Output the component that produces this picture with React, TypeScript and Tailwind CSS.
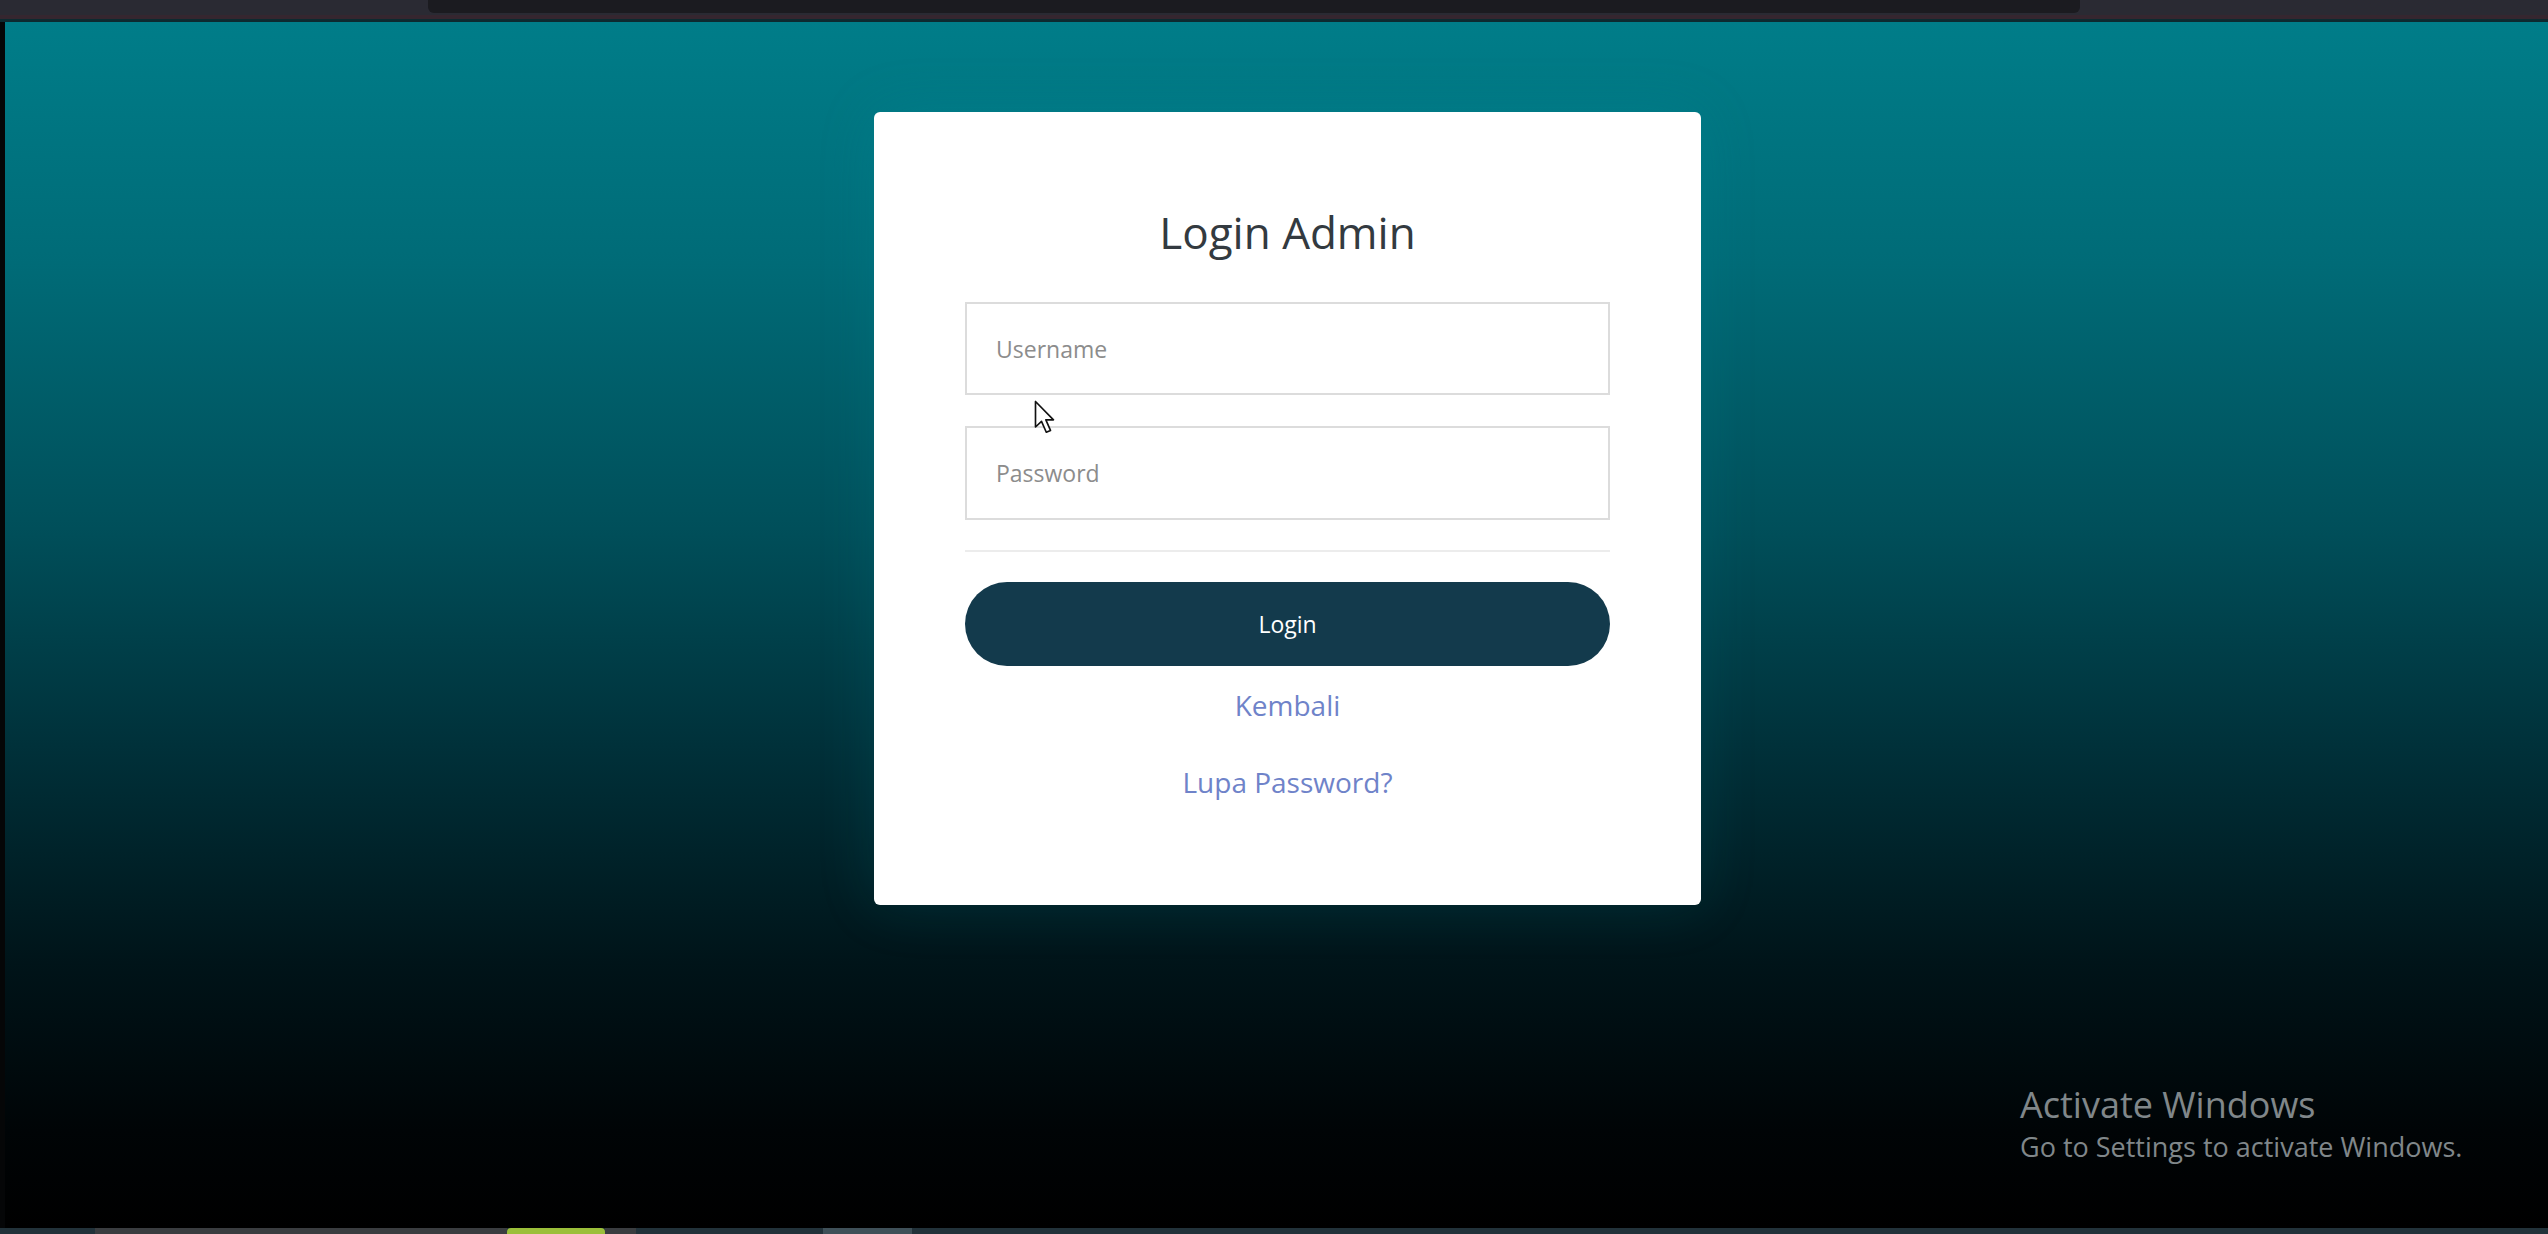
import React from 'react';

const Cursor = () => (
  <svg width="24" height="36" viewBox="0 0 16 24" className="pointer-events-none absolute left-[1034px] top-[400px]">
    <path
      d="M1 1 L1 18 L5 14.2 L8.2 21.5 L11 20.3 L7.9 13.2 L13 13.2 Z"
      fill="#ffffff"
      stroke="#111111"
      strokeWidth="1.1"
      strokeLinejoin="round"
    />
  </svg>
);

const LoginCard = () => {
  return (
    <div className="flex w-[827px] flex-col rounded-md bg-white px-[91px] pb-[103px] pt-[95px] shadow-[0_0_60px_rgba(0,160,175,0.14)]">
      <h1 className="text-center text-[44px] font-normal leading-[50px] text-[#333a40]">Login Admin</h1>
      <form className="mt-[45px] flex flex-col" onSubmit={(e) => e.preventDefault()}>
        <input
          type="text"
          placeholder="Username"
          className="h-[93px] w-full border-2 border-[#dcdcdc] bg-white px-[29px] text-[23px] text-[#555] outline-none placeholder:text-[#8c8c8c]"
        />
        <input
          type="password"
          placeholder="Password"
          className="mt-[31px] h-[94px] w-full border-2 border-[#dcdcdc] bg-white px-[29px] text-[23px] text-[#555] outline-none placeholder:text-[#8c8c8c]"
        />
        <hr className="mt-[30px] border-t-2 border-[#ececec]" />
        <button
          type="submit"
          className="mt-[30px] h-[84px] w-full rounded-full bg-[#133a4c] text-[23px] text-white"
        >
          Login
        </button>
      </form>
      <a href="#" className="mt-[19px] text-center text-[28px] leading-[40px] text-[#6f83c9]">
        Kembali
      </a>
      <a href="#" className="mt-[37px] text-center text-[28px] leading-[40px] text-[#6f83c9]">
        Lupa Password?
      </a>
    </div>
  );
};

export default function App() {
  return (
    <div className="relative flex h-[1234px] w-[2548px] flex-col overflow-hidden bg-black font-['Open_Sans',sans-serif]">
      {/* browser chrome strip */}
      <div className="flex h-[22px] flex-col bg-[#2a2a33]">
        <div className="flex h-[15px]">
          <div className="ml-[428px] h-[13px] w-[1652px] rounded-b-md bg-[#1b1b20]" />
        </div>
        <div className="h-[4px] bg-[#35262f]" />
        <div className="h-[3px] bg-[#0d2a30]" />
      </div>

      <div className="flex flex-1">
        <div className="w-[5px] bg-[#050607]" />
        <main className="flex flex-1 justify-center bg-[linear-gradient(to_bottom,#007d89_0%,#006b77_20%,#004f5a_42%,#00313a_60%,#001419_78%,#000406_92%,#000000_100%)] pl-[22px] pt-[90px]">
          <div className="self-start">
            <LoginCard />
          </div>
        </main>
      </div>

      <div className="flex h-[6px] bg-[#22323a]">
        <div className="ml-[95px] h-full w-[412px] bg-[#3a3d40]" />
        <div className="h-full w-[98px] rounded-t-sm bg-[#9bbf3a]" />
        <div className="h-full w-[31px] bg-[#3a3d40]" />
        <div className="ml-[187px] h-full w-[89px] bg-[#3f5058]" />
      </div>

      <div className="pointer-events-none absolute left-[2020px] top-[1083px] flex flex-col font-['Open_Sans',sans-serif] text-[#80878a]">
        <span className="text-[36px] leading-[44px]">Activate Windows</span>
        <span className="text-[27px] leading-[40px]">Go to Settings to activate Windows.</span>
      </div>

      <Cursor />
    </div>
  );
}
